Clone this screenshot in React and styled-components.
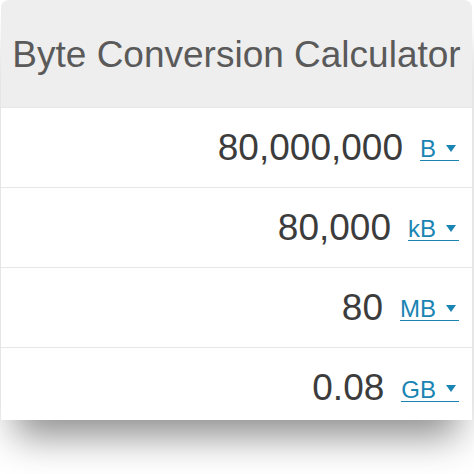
import React from "react";
import styled, { createGlobalStyle } from "styled-components";

const GlobalStyle = createGlobalStyle`
  body {
    margin: 0;
    background: #ffffff;
    font-family: "Liberation Sans", Arial, sans-serif;
  }
`;

const Page = styled.div`
  width: 474px;
  height: 474px;
  padding: 0 2px 0 1px;
  box-sizing: border-box;
  overflow: hidden;
`;

const Card = styled.div`
  background: #ffffff;
  border-radius: 8px 8px 0 0;
  box-shadow: 0 30px 36px -14px rgba(0, 0, 0, 0.45);
`;

const Header = styled.div`
  height: 107px;
  display: flex;
  align-items: center;
  justify-content: center;
  background: #eeeeee;
  border-radius: 8px 8px 0 0;
`;

const Title = styled.h1`
  margin: 0;
  padding-top: 2px;
  font-size: 37px;
  font-weight: 400;
  color: #5a5a5a;
`;

const Row = styled.div`
  height: ${({ $last }) => ($last ? "64px" : "79px")};
  padding-top: ${({ $last }) => ($last ? "8px" : "0")};
  display: flex;
  align-items: center;
  justify-content: flex-end;
  gap: 17px;
  padding-right: 13px;
  border-top: 1px solid #e7e7e7;
`;

const Value = styled.span`
  font-size: 37px;
  color: #3c3c3c;
`;

const Unit = styled.a`
  display: inline-flex;
  align-items: center;
  gap: 10px;
  padding-right: 3px;
  margin-top: 4px;
  font-size: 24px;
  line-height: 22px;
  color: #1a84b3;
  border-bottom: 1.5px solid #1a84b3;
  cursor: pointer;
`;

const Caret = styled.span`
  display: inline-block;
  width: 0;
  height: 0;
  border-left: 5px solid transparent;
  border-right: 5px solid transparent;
  border-top: 7px solid currentColor;
  margin-bottom: 2px;
`;

const rows = [
  { value: "80,000,000", unit: "B" },
  { value: "80,000", unit: "kB" },
  { value: "80", unit: "MB" },
  { value: "0.08", unit: "GB" },
];

export default function App() {
  return (
    <>
      <GlobalStyle />
      <Page>
        <Card>
          <Header>
            <Title>Byte Conversion Calculator</Title>
          </Header>
          {rows.map((r, i) => (
            <Row key={r.unit} $last={i === rows.length - 1}>
              <Value>{r.value}</Value>
              <Unit>
                {r.unit}
                <Caret />
              </Unit>
            </Row>
          ))}
        </Card>
      </Page>
    </>
  );
}
